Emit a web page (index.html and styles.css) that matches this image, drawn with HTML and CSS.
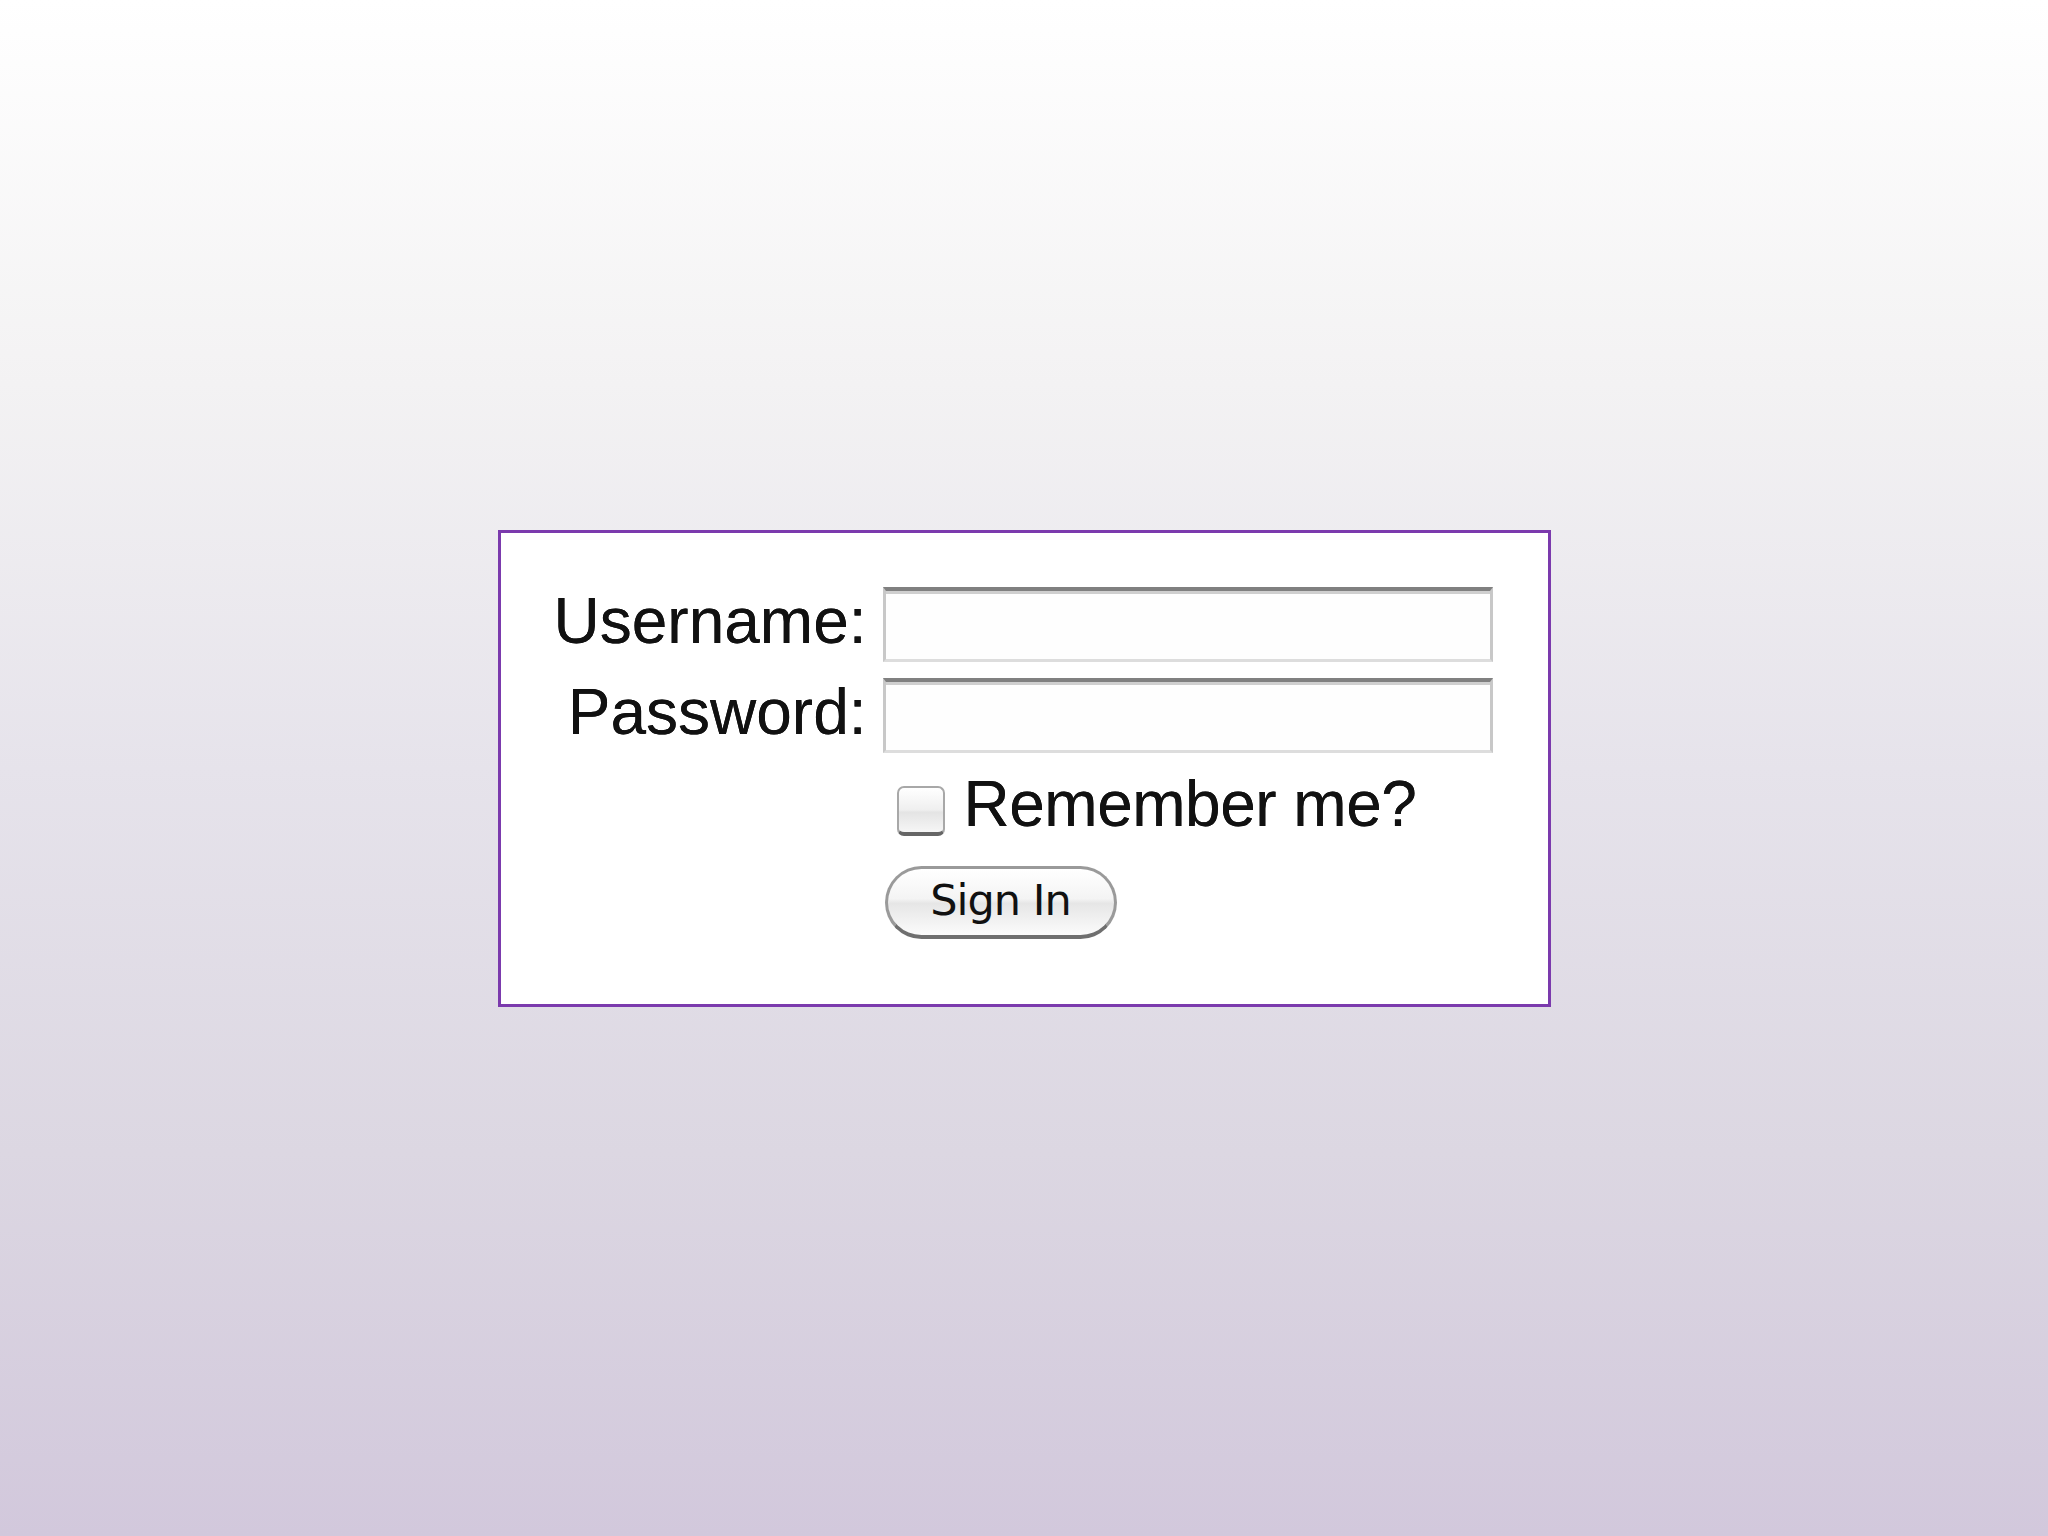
FILE: index.html
```html
<!DOCTYPE html>
<html lang="en">
<head>
    <meta charset="UTF-8">
    <meta name="viewport" content="width=device-width, initial-scale=1.0">
    <title>Sign In</title>
    <link rel="stylesheet" href="styles.css">
</head>
<body>
    <!-- Login box -->
    <div class="login-box">
        <form class="login-form">
            <label for="username" class="field-label">Username:</label>
            <input type="text" id="username" class="text-field">

            <label for="password" class="field-label">Password:</label>
            <input type="password" id="password" class="text-field">

            <div class="remember-row">
                <input type="checkbox" id="remember" class="check-box">
                <label for="remember" class="remember-label">Remember me?</label>
            </div>

            <div class="button-row">
                <button type="button" class="sign-in">Sign In</button>
            </div>
        </form>
    </div>
</body>
</html>
```

FILE: styles.css
```css
/* Page */
body {
    margin: 0;
    padding: 0;
    height: 100vh;
    display: flex;
    align-items: center;
    justify-content: center;
    font-family: "Liberation Sans", Arial, sans-serif;
    color: #111;
    background: linear-gradient(#ffffff 0%, #f3f2f3 25%, #e6e3eb 50%, #dcd7e2 75%, #d2c8dc 100%);
}

/* Box */
.login-box {
    background-color: #fff;
    border: 3px solid #7b3aad;
    padding: 54px 55px 65px 53px;
}

.login-form {
    display: grid;
    grid-template-columns: auto 610px;
    column-gap: 16px;
    row-gap: 16px;
    align-items: start;
}

.field-label {
    font-size: 64px;
    line-height: 68px;
    text-align: right;
    text-shadow: 0 0 0.4px #111;
}

.text-field {
    box-sizing: border-box;
    width: 610px;
    height: 75px;
    margin: 0;
    background-color: #fefefe;
    border-top: 4px solid #808080;
    border-left: 3px solid #c8c8c8;
    border-right: 3px solid #c8c8c8;
    border-bottom: 3px solid #dddddd;
    box-shadow: inset 0 3px 0 #cfcfcf;
    outline: none;
}

/* Remember me */
.remember-row {
    grid-column: 2;
    display: flex;
    align-items: center;
    margin-top: -2px;
    padding-left: 14px;
}

.check-box {
    appearance: none;
    -webkit-appearance: none;
    box-sizing: border-box;
    width: 48px;
    height: 50px;
    margin: 14px 19px 0 0;
    border: 2px solid #a8a8a8;
    border-bottom: 4px solid #666;
    border-radius: 7px;
    background: linear-gradient(#ffffff, #efefef 50%, #e4e4e4 55%, #f6f6f6);
}

.remember-label {
    font-size: 64px;
    letter-spacing: -0.5px;
    text-shadow: 0 0 0.4px #111;
}

/* Button */
.button-row {
    grid-column: 2;
    padding-top: 9px;
    padding-left: 2px;
}

.sign-in {
    box-sizing: border-box;
    width: 232px;
    height: 73px;
    border: 3px solid #9a9a9a;
    border-bottom: 4px solid #6f6f6f;
    border-radius: 37px;
    background: linear-gradient(#ffffff, #f4f4f4 45%, #e6e6e6 52%, #fbfbfb);
    font-family: "DejaVu Sans", sans-serif;
    font-size: 43px;
    letter-spacing: -1px;
    color: #111;
    padding: 0 0 4px 0;
    cursor: pointer;
}
```
